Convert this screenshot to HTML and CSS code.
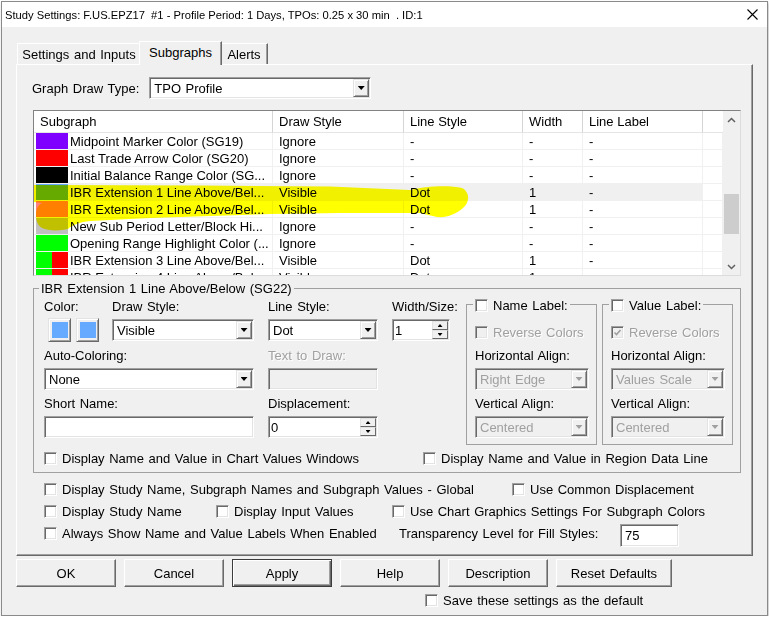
FILE: index.html
```html
<!DOCTYPE html>
<html lang="en">
<head>
  <meta charset="UTF-8" />
  <title>Study Settings</title>
  <link rel="stylesheet" href="styles.css">
</head>
<body>
  <div class="dialog">
    <div class="titlebar">
      <span class="title">Study Settings: F.US.EPZ17  #1 - Profile Period: 1 Days, TPOs: 0.25 x 30 min  . ID:1</span>
      <svg class="close" width="11" height="11" viewBox="0 0 11 11"><path d="M0.5 0.5L10.5 10.5M10.5 0.5L0.5 10.5" stroke="#000" stroke-width="1.1" fill="none"/></svg>
    </div>

    <div class="content">
      <div class="tabs">
        <div class="tab tab-settings">Settings and Inputs</div>
        <div class="tab tab-subgraphs active">Subgraphs</div>
        <div class="tab tab-alerts">Alerts</div>
      </div>

      <div class="panel">
        <div class="draw-type">
          <span class="draw-type-label">Graph Draw Type:</span>
          <div class="combo combo-type"><span class="combo-text">TPO Profile</span><span class="drop"></span></div>
        </div>

        <div class="list">
          <div class="grid">
            <div class="row head">
              <span>Subgraph</span><span>Draw Style</span><span>Line Style</span><span>Width</span><span>Line Label</span><span class="fill"></span>
            </div>
            <div class="row">
              <span class="name"><i class="sw sw-purple"></i>Midpoint Marker Color (SG19)</span><span>Ignore</span><span>-</span><span>-</span><span>-</span><span class="fill"></span>
            </div>
            <div class="row">
              <span class="name"><i class="sw sw-red"></i>Last Trade Arrow Color (SG20)</span><span>Ignore</span><span>-</span><span>-</span><span>-</span><span class="fill"></span>
            </div>
            <div class="row">
              <span class="name"><i class="sw sw-black"></i>Initial Balance Range Color (SG...</span><span>Ignore</span><span>-</span><span>-</span><span>-</span><span class="fill"></span>
            </div>
            <div class="row sel">
              <span class="name"><i class="sw sw-blue"></i>IBR Extension 1 Line Above/Bel...</span><span>Visible</span><span>Dot</span><span>1</span><span>-</span><span class="fill"></span>
            </div>
            <div class="row">
              <span class="name"><i class="sw sw-pink"></i>IBR Extension 2 Line Above/Bel...</span><span>Visible</span><span>Dot</span><span>1</span><span>-</span><span class="fill"></span>
            </div>
            <div class="row">
              <span class="name"><i class="sw sw-gray"></i>New Sub Period Letter/Block Hi...</span><span>Ignore</span><span>-</span><span>-</span><span>-</span><span class="fill"></span>
            </div>
            <div class="row">
              <span class="name"><i class="sw sw-green"></i>Opening Range Highlight Color (...</span><span>Ignore</span><span>-</span><span>-</span><span>-</span><span class="fill"></span>
            </div>
            <div class="row">
              <span class="name"><i class="sw sw-split"></i>IBR Extension 3 Line Above/Bel...</span><span>Visible</span><span>Dot</span><span>1</span><span>-</span><span class="fill"></span>
            </div>
            <div class="row">
              <span class="name"><i class="sw sw-split"></i>IBR Extension 4 Line Above/Bel...</span><span>Visible</span><span>Dot</span><span>1</span><span>-</span><span class="fill"></span>
            </div>
          </div>

          <div class="scroll">
            <div class="sb-btn">
              <svg width="9" height="6" viewBox="0 0 9 6"><polyline points="1,5 4.5,1.5 8,5" fill="none" stroke="#606060" stroke-width="1.5"/></svg>
            </div>
            <div class="track"><div class="thumb"></div></div>
            <div class="sb-btn">
              <svg width="9" height="6" viewBox="0 0 9 6"><polyline points="1,1 4.5,4.5 8,1" fill="none" stroke="#606060" stroke-width="1.5"/></svg>
            </div>
          </div>

          <!-- highlighter stroke drawn over the rows -->
          <svg class="marker" width="706" height="164" viewBox="34 111 706 164">
            <path d="M33,185 L200,185.5 L330,186.5 L410,190 C425,186 450,185 462,188 C470,192 470,202 463,208 C456,214 447,218 437,217 L420,213 L340,213 L270,214 L150,218 L90,221 C80,222 72,225 68,229 C60,231 48,231 42,228 C37,225 36,220 36,214 C36,209 38,205 42,203 L33,202 Z" fill="#ffff00"/>
          </svg>
        </div>

        <fieldset class="group">
          <legend>IBR Extension 1 Line Above/Below (SG22)</legend>
          <div class="group-body">
            <div class="group-row">
              <div class="fields">
                <div class="field">
                  <span class="lbl">Color:</span>
                  <div class="colors">
                    <span class="color-btn"><i></i></span>
                    <span class="color-btn"><i></i></span>
                  </div>
                </div>
                <div class="field">
                  <span class="lbl">Draw Style:</span>
                  <div class="combo"><span class="combo-text">Visible</span><span class="drop"></span></div>
                </div>
                <div class="field">
                  <span class="lbl">Line Style:</span>
                  <div class="combo"><span class="combo-text">Dot</span><span class="drop"></span></div>
                </div>
                <div class="field">
                  <span class="lbl">Width/Size:</span>
                  <div class="edit spin"><span class="edit-text">1</span><span class="spin-btns"><span class="spin-up"></span><span class="spin-down"></span></span></div>
                </div>

                <div class="field span2">
                  <span class="lbl">Auto-Coloring:</span>
                  <div class="combo"><span class="combo-text">None</span><span class="drop"></span></div>
                </div>
                <div class="field col3">
                  <span class="lbl disabled">Text to Draw:</span>
                  <div class="edit off"></div>
                </div>

                <div class="field span2">
                  <span class="lbl">Short Name:</span>
                  <div class="edit"></div>
                </div>
                <div class="field col3">
                  <span class="lbl">Displacement:</span>
                  <div class="edit spin"><span class="edit-text">0</span><span class="spin-btns"><span class="spin-up"></span><span class="spin-down"></span></span></div>
                </div>
              </div>

              <fieldset class="label-box name-box">
                <legend><span class="check"><span class="box"></span>Name Label:</span></legend>
                <div class="label-body">
                  <div class="reverse"><span class="check disabled"><span class="box off"></span>Reverse Colors</span></div>
                  <span class="lbl">Horizontal Align:</span>
                  <div class="combo off"><span class="combo-text">Right Edge</span><span class="drop"></span></div>
                  <span class="lbl gap">Vertical Align:</span>
                  <div class="combo off"><span class="combo-text">Centered</span><span class="drop"></span></div>
                </div>
              </fieldset>

              <fieldset class="label-box value-box">
                <legend><span class="check"><span class="box"></span>Value Label:</span></legend>
                <div class="label-body">
                  <div class="reverse"><span class="check disabled"><span class="box off"><svg width="9" height="9" viewBox="0 0 9 9"><polyline points="1.5,4.5 3.5,6.5 7.5,2" fill="none" stroke="#a0a0a0" stroke-width="1.6"/></svg></span>Reverse Colors</span></div>
                  <span class="lbl">Horizontal Align:</span>
                  <div class="combo off"><span class="combo-text">Values Scale</span><span class="drop"></span></div>
                  <span class="lbl gap">Vertical Align:</span>
                  <div class="combo off"><span class="combo-text">Centered</span><span class="drop"></span></div>
                </div>
              </fieldset>
            </div>

            <div class="check-row">
              <span class="check chart-values"><span class="box"></span>Display Name and Value in Chart Values Windows</span>
              <span class="check"><span class="box"></span>Display Name and Value in Region Data Line</span>
            </div>
          </div>
        </fieldset>

        <div class="options">
          <div class="opt-row">
            <span class="check w-global"><span class="box"></span>Display Study Name, Subgraph Names and Subgraph Values - Global</span>
            <span class="check"><span class="box"></span>Use Common Displacement</span>
          </div>
          <div class="opt-row">
            <span class="check w-study"><span class="box"></span>Display Study Name</span>
            <span class="check w-inputs"><span class="box"></span>Display Input Values</span>
            <span class="check"><span class="box"></span>Use Chart Graphics Settings For Subgraph Colors</span>
          </div>
          <div class="opt-row">
            <span class="check w-always"><span class="box"></span>Always Show Name and Value Labels When Enabled</span>
            <span class="transparency">Transparency Level for Fill Styles:</span>
            <div class="edit transp"><span class="edit-text">75</span></div>
          </div>
        </div>
      </div>

      <div class="buttons">
        <span class="btn">OK</span>
        <span class="btn">Cancel</span>
        <span class="btn btn-default">Apply</span>
        <span class="btn">Help</span>
        <span class="btn">Description</span>
        <span class="btn btn-wide">Reset Defaults</span>
      </div>

      <div class="save-row">
        <span class="check"><span class="box"></span>Save these settings as the default</span>
      </div>
    </div>
  </div>
</body>
</html>
```
FILE: styles.css
```css
* {
  box-sizing: border-box;
}

body {
  margin: 0;
  background: #fff;
  font-family: "Liberation Sans", Arial, sans-serif;
  font-size: 13px;
  word-spacing: 1px;
  color: #000;
}

.dialog {
  width: 767px;
  height: 615px;
  margin: 1px 0 0 1px;
  border: 1px solid #8a8a8a;
  background: #f0f0f0;
  box-shadow: 1px 2px 3px rgba(0, 0, 0, 0.25);
}

.titlebar {
  height: 25px;
  display: flex;
  align-items: center;
  padding: 0 9px 0 3px;
  background: #fff;
  font-size: 11.2px;
  word-spacing: 0;
}

.title {
  flex: 1;
  white-space: pre;
}

.content {
  padding: 14px 0 0 14px;
}

/* tabs */
.tabs {
  display: flex;
  align-items: flex-end;
  height: 23px;
  padding-left: 1px;
}

.tab {
  height: 21px;
  display: flex;
  align-items: center;
  justify-content: center;
  border: 1px solid;
  border-bottom: none;
  border-color: #fff #696969 transparent #fff;
  box-shadow: inset -1px 0 #a0a0a0;
  background: #f0f0f0;
}

.tab-settings { width: 124px; }
.tab-subgraphs { width: 79px; }
.tab-alerts { width: 48px; }

.tab.active {
  position: relative;
  z-index: 1;
  width: 83px;
  height: 24px;
  margin: 0 -2px -1px;
  padding-bottom: 3px;
}

.panel {
  width: 737px;
  height: 492px;
  padding: 12px 0 0 16px;
  border: 1px solid;
  border-color: #fff #696969 #696969 #fff;
  box-shadow: inset -1px -1px #a0a0a0;
}

/* controls */
.combo,
.edit {
  height: 22px;
  display: flex;
  align-items: center;
  padding: 1px;
  background: #fff;
  border: 1px solid;
  border-color: #a0a0a0 #fff #fff #a0a0a0;
  box-shadow: inset 1px 1px #696969, inset -1px -1px #e3e3e3;
}

.combo-text,
.edit-text {
  flex: 1;
  padding-left: 3px;
  white-space: nowrap;
}

.edit-text {
  padding-left: 1px;
}

.drop {
  width: 16px;
  height: 18px;
  display: flex;
  align-items: center;
  justify-content: center;
  background: #f0f0f0;
  border: 1px solid;
  border-color: #e3e3e3 #696969 #696969 #e3e3e3;
  box-shadow: inset 1px 1px #fff, inset -1px -1px #a0a0a0;
}

.drop::after {
  content: "";
  width: 7px;
  height: 4px;
  background: #000;
  clip-path: polygon(0 0, 100% 0, 50% 100%);
}

.combo.off,
.edit.off {
  background: #f0f0f0;
  color: #a0a0a0;
}

.combo.off .drop::after {
  background: #a0a0a0;
}

.spin-btns {
  width: 16px;
  height: 18px;
  display: flex;
  flex-direction: column;
}

.spin-up,
.spin-down {
  height: 9px;
  display: flex;
  align-items: center;
  justify-content: center;
  background: #f0f0f0;
  border: 1px solid;
  border-color: #e3e3e3 #696969 #696969 #e3e3e3;
}

.spin-up::after,
.spin-down::after {
  content: "";
  width: 5px;
  height: 3px;
  background: #000;
}

.spin-up::after { clip-path: polygon(50% 0, 100% 100%, 0 100%); }
.spin-down::after { clip-path: polygon(0 0, 100% 0, 50% 100%); }

.check {
  display: inline-flex;
  align-items: center;
  gap: 5px;
  line-height: 15px;
  white-space: nowrap;
}

.box {
  width: 13px;
  height: 13px;
  flex: none;
  display: flex;
  align-items: center;
  justify-content: center;
  background: #fff;
  border: 1px solid;
  border-color: #a0a0a0 #fff #fff #a0a0a0;
  box-shadow: inset 1px 1px #696969, inset -1px -1px #e3e3e3;
}

.box.off {
  background: #f0f0f0;
}

.disabled {
  color: #a0a0a0;
  text-shadow: 1px 1px #fff;
}

/* graph draw type */
.draw-type {
  display: flex;
  align-items: center;
  gap: 10px;
  height: 22px;
  margin-left: -1px;
}

.combo-type {
  width: 222px;
}

/* subgraph list */
.list {
  position: relative;
  display: flex;
  width: 708px;
  height: 166px;
  margin-top: 11px;
  overflow: hidden;
  background: #fff;
  border: 1px solid;
  border-color: #828282 #dcdcdc #dcdcdc #828282;
  word-spacing: 0;
}

.grid {
  width: 689px;
}

.row {
  display: grid;
  grid-template-columns: 239px 131px 119px 60px 120px 20px;
  height: 17px;
}

.row > span {
  padding-left: 6px;
  line-height: 18px;
  white-space: nowrap;
  overflow: hidden;
  border-right: 1px solid #f0f0f0;
  border-bottom: 1px solid #f0f0f0;
}

.row.head {
  height: 22px;
}

.row.head > span {
  line-height: 22px;
  border-right-color: #d5d5d5;
  border-bottom-color: #e5e5e5;
}

.row.head > .fill {
  border-right: none;
}

.row.sel > span:not(.fill) {
  background: #f0f0f0;
}

.row > .name {
  display: flex;
  padding-left: 2px;
}

.sw {
  width: 32px;
  height: 16px;
  flex: none;
  margin-right: 2px;
}

.sw-purple { background: #8000ff; }
.sw-red { background: #ff0000; }
.sw-black { background: #000; }
.sw-blue { background: #66aaff; }
.sw-pink { background: #ff8080; }
.sw-gray { background: #c0c0c0; }
.sw-green { background: #00ff00; }
.sw-split { background: linear-gradient(90deg, #00ff00 50%, #ff0000 50%); }

.scroll {
  width: 17px;
  display: flex;
  flex-direction: column;
  background: #f0f0f0;
}

.sb-btn {
  height: 17px;
  display: flex;
  align-items: center;
  justify-content: center;
}

.track {
  flex: 1;
  padding: 66px 1px 0;
}

.thumb {
  height: 40px;
  background: #cdcdcd;
}

.marker {
  position: absolute;
  left: 0;
  top: 0;
  mix-blend-mode: multiply;
  pointer-events: none;
}

/* subgraph group box */
fieldset {
  margin: 0;
  padding: 0;
  min-width: 0;
  border: 1px solid #a0a0a0;
}

.group {
  width: 708px;
  margin-top: 5px;
}

.group > legend {
  margin-left: 5px;
  padding: 0 2px;
  line-height: 15px;
}

.group-body {
  padding: 3px 7px 6px 10px;
}

.group-row {
  display: flex;
  align-items: flex-start;
}

.fields {
  display: grid;
  grid-template-columns: 54px 142px 110px 58px;
  column-gap: 14px;
  row-gap: 6px;
}

.field {
  display: flex;
  flex-direction: column;
}

.lbl {
  display: block;
  height: 20px;
  line-height: 15px;
  white-space: nowrap;
}

.span2 { grid-column: 1 / 3; }
.col3 { grid-column: 3; }

.colors {
  display: flex;
  gap: 5px;
  margin: -1px 0 0 4px;
}

.color-btn {
  width: 23px;
  height: 24px;
  flex: none;
  display: flex;
  align-items: center;
  justify-content: center;
  border: 1px solid;
  border-color: #e3e3e3 #696969 #696969 #e3e3e3;
  box-shadow: inset 1px 1px #fff, inset -1px -1px #a0a0a0;
}

.color-btn i {
  width: 16px;
  height: 16px;
  background: #66aaff;
}

.label-box {
  width: 131px;
  margin-top: -5px;
}

.name-box { margin-left: 16px; }
.value-box { margin-left: 5px; }

.label-box > legend {
  margin-left: 6px;
  padding: 4px 2px 0;
  line-height: 15px;
}

.label-body {
  padding: 0 7px 6px 8px;
}

.reverse {
  height: 33px;
  padding-top: 10px;
}

.lbl.gap {
  margin-top: 6px;
}

.check-row {
  display: flex;
  margin-top: 6px;
}

.chart-values { width: 379px; }

/* global options */
.options {
  margin-top: 5px;
  padding-left: 11px;
}

.opt-row {
  display: flex;
  align-items: center;
  height: 22px;
}

.w-global { width: 468px; }
.w-study { width: 172px; }
.w-inputs { width: 176px; }
.w-always { width: 355px; }

.transparency {
  width: 221px;
  white-space: nowrap;
}

.edit.transp {
  width: 59px;
  height: 23px;
  margin-top: 4px;
  padding-left: 3px;
}

/* dialog buttons */
.buttons {
  display: flex;
  gap: 8px;
  margin-top: 3px;
}

.btn {
  width: 100px;
  height: 28px;
  display: flex;
  align-items: center;
  justify-content: center;
  background: #f0f0f0;
  border: 1px solid;
  border-color: #fff #696969 #696969 #fff;
  box-shadow: inset -1px -1px #a0a0a0;
}

.btn-wide {
  width: 116px;
}

.btn-default {
  border-color: #3c3c3c;
  box-shadow: inset 1px 1px #fff, inset -1px -1px #696969, inset -2px -2px #a0a0a0;
}

.save-row {
  margin-top: 6px;
  padding-left: 409px;
}
```
